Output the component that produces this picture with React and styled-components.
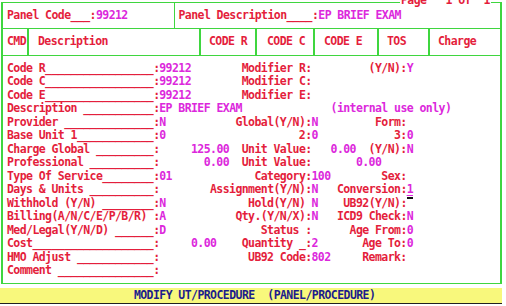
import React from "react";
import styled, { createGlobalStyle, css } from "styled-components";

const RED = "#e41e3c";
const MAG = "#dc28dc";
const GREEN = "#3fd63f";
const CW = 6.35;

const GlobalStyle = createGlobalStyle`
  html, body { margin: 0; padding: 0; background: #ffffff; }
  #root { width: 506px; height: 306px; }
`;

const Screen = styled.div`
  position: relative;
  width: 506px;
  height: 306px;
  overflow: hidden;
  background: #ffffff;
  padding-top: 2px;
  box-sizing: border-box;
  font-family: "DejaVu Sans Mono", "Liberation Mono", monospace;
  font-weight: 700;
  font-size: 11.5px;
  letter-spacing: -0.57px;
  line-height: 13.5px;
  color: ${RED};
`;

const Frame = styled.div`
  margin-left: 1px;
  width: 501px;
  box-sizing: border-box;
  border: 1px solid ${GREEN};
  border-left-width: 2px;
  border-right-width: 2px;
`;

const TitleBar = styled.div`
  display: flex;
  height: 25px;
  border-bottom: 1px solid ${GREEN};
`;

const TitleCell = styled.div`
  display: flex;
  align-items: center;
  white-space: pre;
  box-sizing: border-box;
  padding-left: ${(p) => p.$pad}px;
  ${(p) => (p.$w ? css`width: ${p.$w}px;` : css`flex: 1;`)}
  ${(p) => p.$sep && css`border-left: 1px solid ${GREEN};`}
`;

const HeaderBar = styled.div`
  display: flex;
  height: 26px;
  border-bottom: 1px solid ${GREEN};
`;

const HeadCell = styled.div`
  display: flex;
  align-items: center;
  white-space: pre;
  box-sizing: border-box;
  padding-left: ${(p) => p.$pad}px;
  ${(p) => (p.$w ? css`width: ${p.$w}px;` : css`flex: 1;`)}
  ${(p) => p.$sep && css`border-left: 2px solid ${GREEN};`}
`;

const Body = styled.div`
  padding: 5.75px 0 5.25px 4px;
`;

const Line = styled.div`
  display: grid;
  grid-template-columns: repeat(79, ${CW}px);
  height: 13.5px;
  white-space: pre;
`;

const Seg = styled.span`
  grid-row: 1;
  grid-column: ${(p) => p.$col} / span ${(p) => p.$len};
  min-width: 0;
  color: ${(p) => (p.$tone === "m" ? MAG : p.$tone === "n" ? "#1c1c8c" : RED)};
  ${(p) =>
    p.$under &&
    css`
      text-decoration: underline;
      text-decoration-thickness: 1px;
      text-underline-offset: 2px;
    `}
`;

const Val = styled.span`
  color: ${MAG};
`;

const Cursor = styled.span`
  grid-row: 1;
  grid-column: ${(p) => p.$col} / span 1;
  align-self: start;
  width: 6px;
  height: 2px;
  margin-top: 0.5px;
  background: #111111;
`;

const StatusBar = styled.div`
  margin-top: 4px;
  width: 502px;
  height: 16px;
  box-sizing: border-box;
  background: #f8f87c;
  border-bottom: 1px solid #202020;
  padding-left: 7px;
  display: flex;
  align-items: center;
`;

const PageTag = styled.div`
  position: absolute;
  top: -6.5px;
  left: 400px;
  padding: 0 1px;
  background: #ffffff;
  white-space: pre;
  color: ${RED};
`;

const u = (n) => "_".repeat(n);

const rows = [
  [[1, "Code R" + u(17) + ":"], [25, "99212", "m"], [38, "Modifier R:"], [58, "(Y/N):"], [64, "Y", "m"]],
  [[1, "Code C" + u(17) + ":"], [25, "99212", "m"], [38, "Modifier C:"]],
  [[1, "Code E" + u(17) + ":"], [25, "99212", "m"], [38, "Modifier E:"]],
  [[1, "Description " + u(11) + ":"], [25, "EP BRIEF EXAM", "m"], [52, "(internal use only)", "m"]],
  [[1, "Provider " + u(14) + ":"], [25, "N", "m"], [37, "Global(Y/N):"], [49, "N", "m"], [59, "Form:"]],
  [[1, "Base Unit 1" + u(12) + ":"], [25, "0", "m"], [47, "2:"], [49, "0", "m"], [62, "3:"], [64, "0", "m"]],
  [[1, "Charge Global " + u(9) + ":"], [30, "125.00", "m"], [38, "Unit Value:"], [52, "0.00", "m"], [58, "(Y/N):"], [64, "N", "m"]],
  [[1, "Professional " + u(10) + ":"], [32, "0.00", "m"], [38, "Unit Value:"], [56, "0.00", "m"]],
  [[1, "Type Of Service" + u(8) + ":"], [25, "01", "m"], [40, "Category:"], [49, "100", "m"], [60, "Sex:"]],
  [[1, "Days & Units " + u(10) + ":"], [33, "Assignment(Y/N):"], [49, "N", "m"], [53, "Conversion:"], [64, "1", "m", true]],
  [[1, "Withhold (Y/N) " + u(8) + ":"], [25, "N", "m"], [39, "Hold(Y/N)"], [49, "N", "m"], [54, "UB92(Y/N):"], [64, null, "cursor"]],
  [[1, "Billing(A/N/C/E/P/B/R) :"], [25, "A", "m"], [37, "Qty.(Y/N/X):"], [49, "N", "m"], [53, "ICD9 Check:"], [64, "N", "m"]],
  [[1, "Med/Legal(Y/N/D) " + u(6) + ":"], [25, "D", "m"], [41, "Status :"], [55, "Age From:"], [64, "0", "m"]],
  [[1, "Cost" + u(19) + ":"], [30, "0.00", "m"], [38, "Quantity _:"], [49, "2", "m"], [57, "Age To:"], [64, "0", "m"]],
  [[1, "HMO Adjust " + u(12) + ":"], [39, "UB92 Code:"], [49, "802", "m"], [57, "Remark:"]],
  [[1, "Comment " + u(15) + ":"]],
];

const headers = [
  { label: "CMD", w: 24, pad: 4 },
  { label: "Description", w: 172, pad: 9, sep: true },
  { label: "CODE R", w: 56, pad: 8, sep: true },
  { label: "CODE C", w: 58, pad: 10, sep: true },
  { label: "CODE E", w: 64, pad: 9, sep: true },
  { label: "TOS", w: 51, pad: 8, sep: true },
  { label: "Charge", pad: 8, sep: true },
];

function Row({ pieces }) {
  return (
    <Line>
      {pieces.map(([col, text, tone, under], i) =>
        tone === "cursor" ? (
          <Cursor key={i} $col={col} />
        ) : (
          <Seg key={i} $col={col} $len={text.length} $tone={tone} $under={under}>
            {text}
          </Seg>
        )
      )}
    </Line>
  );
}

export default function App() {
  return (
    <>
      <GlobalStyle />
      <Screen>
        <Frame>
          <TitleBar>
            <TitleCell $w={171} $pad={4}>
              Panel Code___:<Val>99212</Val>
            </TitleCell>
            <TitleCell $pad={3.5} $sep>
              Panel Description____:<Val>EP BRIEF EXAM</Val>
            </TitleCell>
          </TitleBar>
          <HeaderBar>
            {headers.map((h) => (
              <HeadCell key={h.label} $w={h.w} $pad={h.pad} $sep={h.sep}>
                {h.label}
              </HeadCell>
            ))}
          </HeaderBar>
          <Body>
            {rows.map((r, i) => (
              <Row key={i} pieces={r} />
            ))}
          </Body>
        </Frame>
        <StatusBar>
          <Line>
            <Seg $col={21} $len={38} $tone="n">
              MODIFY UT/PROCEDURE  (PANEL/PROCEDURE)
            </Seg>
          </Line>
        </StatusBar>
        <PageTag>Page   1 of  1</PageTag>
      </Screen>
    </>
  );
}
